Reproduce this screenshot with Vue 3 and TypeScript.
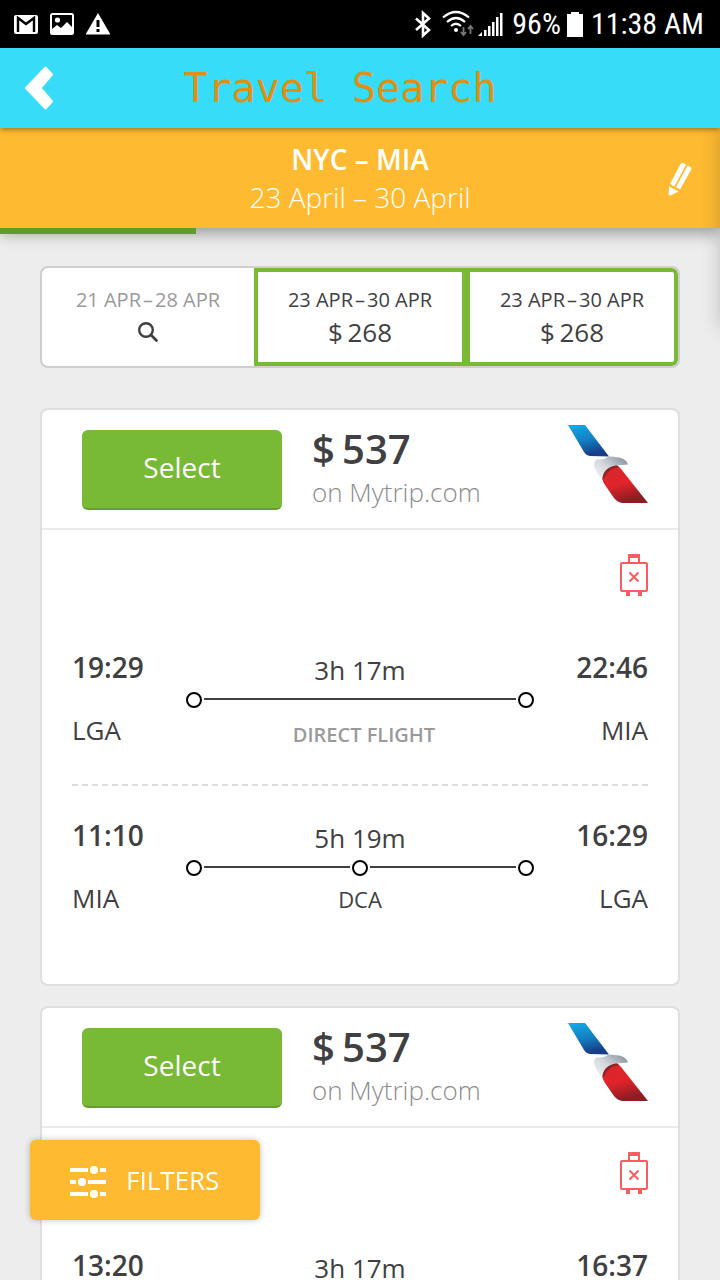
<script setup lang="ts">
import { ref } from 'vue'

interface DateOption {
  id: number
  start: string
  end: string
  price: number | null
}

interface Leg {
  depart: string
  from: string
  arrive: string
  to: string
  duration: string
  stop: string | null
}

interface Offer {
  id: number
  price: number
  agency: string
  legs: Leg[]
}

const dateOptions: DateOption[] = [
  { id: 1, start: '21 APR', end: '28 APR', price: null },
  { id: 2, start: '23 APR', end: '30 APR', price: 268 },
  { id: 3, start: '23 APR', end: '30 APR', price: 268 },
]

const offers: Offer[] = [
  {
    id: 1,
    price: 537,
    agency: 'Mytrip.com',
    legs: [
      { depart: '19:29', from: 'LGA', arrive: '22:46', to: 'MIA', duration: '3h 17m', stop: null },
      { depart: '11:10', from: 'MIA', arrive: '16:29', to: 'LGA', duration: '5h 19m', stop: 'DCA' },
    ],
  },
  {
    id: 2,
    price: 537,
    agency: 'Mytrip.com',
    legs: [
      { depart: '13:20', from: 'LGA', arrive: '16:37', to: 'MIA', duration: '3h 17m', stop: null },
    ],
  },
]

const progress = ref(27.2)
</script>

<template>
  <div class="app">
    <div class="status">
      <div class="status-group notices">
        <svg width="24" height="24" viewBox="0 0 24 24" aria-hidden="true">
          <rect x="0" y="3" width="24" height="19" rx="2" fill="#fff" />
          <path d="M4 20V6l8 6 8-6v14" fill="none" stroke="#000" stroke-width="2.4" />
        </svg>
        <svg width="24" height="24" viewBox="0 0 24 24" aria-hidden="true">
          <rect x="1" y="2" width="22" height="20" rx="1.5" fill="none" stroke="#fff" stroke-width="2" />
          <circle cx="7.5" cy="8" r="2.6" fill="#fff" />
          <path d="M2 17l5-4 4 3 6-6 5 5v7H2z" fill="#fff" />
        </svg>
        <svg width="24" height="24" viewBox="0 0 24 24" aria-hidden="true">
          <path d="M12 1L24.500 22.500H-.5z" fill="#fff" />
          <path d="M10.500 8h3v7h-3zM10.500 17h3v3h-3z" fill="#000" />
        </svg>
      </div>
      <div class="status-group">
        <svg width="18" height="28" viewBox="0 0 18 28" aria-hidden="true">
          <path d="M2 8.500l13 11.500-6 5.500V3l6 5.500L2 20" fill="none" stroke="#fff" stroke-width="2.6" />
        </svg>
        <svg class="wifi" width="32" height="28" viewBox="0 0 32 28" aria-hidden="true">
          <g fill="none" stroke="#fff" stroke-width="2.2">
            <path d="M1 7.500q13-11 26 0" />
            <path d="M5 12q9-8 18 0" />
            <path d="M9 16q5-4.500 10 0" />
          </g>
          <circle cx="14" cy="20" r="2" fill="#fff" />
          <path d="M21.500 17v8m-2.500-3l2.500 3 2.500-3M28.500 24v-8m-2.500 3l2.500-3 2.500 3" fill="none" stroke="#777" stroke-width="1.8" />
        </svg>
        <svg class="signal" width="25" height="28" viewBox="0 0 25 28" aria-hidden="true">
          <path d="M0 26l4-4v4zM6 20h2.500v6H6zM10 16h2.500v10H10zM14 12h2.500v14H14zM18 7h2.500v19H18zM22 3h2.500v23H22z" fill="#fff" />
        </svg>
        <span class="battery-text">96%</span>
        <svg class="battery" width="16" height="26" viewBox="0 0 16 26" aria-hidden="true">
          <path d="M4 1h8v2h4v23H0V3h4z" fill="#fff" />
        </svg>
        <span>11:38 AM</span>
      </div>
    </div>

    <header class="titlebar">
      <button class="back" type="button" aria-label="Back">
        <svg width="28" height="44" viewBox="0 0 28 44" aria-hidden="true">
          <path d="M1 22L20.500 1.500 27 8.500 15.500 22 27 35.500 20.500 42.500z" fill="#fff" stroke="#fff" stroke-width="2" stroke-linejoin="round" />
        </svg>
      </button>
      <h1>Travel Search</h1>
    </header>

    <section class="trip">
      <div class="trip-text">
        <h2>NYC – MIA</h2>
        <p>23 April – 30 April</p>
      </div>
      <button class="edit" type="button" aria-label="Edit search">
        <svg width="24" height="34" viewBox="0 0 24 34" aria-hidden="true">
          <g fill="#fff">
            <path d="M2 22L12.500 2q1-1.500 2.500-1l3 1.500L6.500 24.500z" />
            <path d="M8 25.200L19.500 3.500l3 1.500q1.500 1 .5 3L12 27.500z" />
            <path d="M1 24.500L10.500 29.500 2.500 33.500Q.5 34 .6 32z" />
          </g>
        </svg>
      </button>
      <div class="progress"><div class="progress-bar" :style="{ width: progress + '%' }"></div></div>
      <div class="drawer-edge"></div>
    </section>

    <main class="results">
      <nav class="dates" aria-label="Travel dates">
        <button
          v-for="option in dateOptions"
          :key="option.id"
          type="button"
          class="date"
          :class="{ priced: option.price !== null }"
        >
          <span class="range">{{ option.start }}<span class="dash">–</span>{{ option.end }}</span>
          <span v-if="option.price !== null" class="date-price">$<span class="amount">{{ option.price }}</span></span>
          <svg v-else class="search" width="22" height="22" viewBox="0 0 22 22" aria-label="Search these dates">
            <circle cx="9" cy="9" r="6.800" fill="none" stroke="#404042" stroke-width="2.400" />
            <path d="M14 14l5.500 5.500" stroke="#404042" stroke-width="2.800" stroke-linecap="round" />
          </svg>
        </button>
      </nav>

      <article v-for="offer in offers" :key="offer.id" class="card">
        <div class="card-head">
          <button class="select" type="button">Select</button>
          <div class="offer">
            <strong>$<span class="amount">{{ offer.price }}</span></strong>
            <span class="agency">on {{ offer.agency }}</span>
          </div>
          <svg class="airline" width="80" height="80" viewBox="0 0 80 80" role="img" aria-label="American Airlines">
            <defs>
              <linearGradient :id="'tail' + offer.id" x1="0" y1="0" x2="0.3" y2="1">
                <stop offset="0" stop-color="#13ace8" />
                <stop offset="0.55" stop-color="#1380c3" />
                <stop offset="1" stop-color="#163f88" />
              </linearGradient>
              <linearGradient :id="'head' + offer.id" x1="0" y1="1" x2="1" y2="0.2">
                <stop offset="0" stop-color="#f4f6f8" />
                <stop offset="0.5" stop-color="#d3d8dd" />
                <stop offset="1" stop-color="#8b959f" />
              </linearGradient>
              <linearGradient :id="'wing' + offer.id" x1="0" y1="0" x2="0.3" y2="1">
                <stop offset="0" stop-color="#d5272d" />
                <stop offset="0.55" stop-color="#e2232a" />
                <stop offset="1" stop-color="#8d1d22" />
              </linearGradient>
            </defs>
            <path d="M0 1H17L41 32.500 22 32Q18 31.500 16 28z" :fill="`url(#tail${offer.id})`" />
            <path d="M29 35Q34 37 41 32.500 50 33 53 34 59 36 60 40.500L49 41.500Q38 45 34.500 55.500 27 48 26 41 26 37 29 35z" :fill="`url(#head${offer.id})`" />
            <path d="M34.500 55.500Q35 44 48.500 41.500 51 42 53 45L80 79H54Q49 78 46 74L37 61Q35 58 34.500 55.500z" :fill="`url(#wing${offer.id})`" />
            <path d="M34.500 55.500Q35 43 49 41.500L51 43 44 45Q39 48 37 53z" fill="#8e2424" />
          </svg>
        </div>

        <div class="card-body">
          <svg class="luggage" width="28" height="42" viewBox="0 0 28 42" role="img" aria-label="No checked bag">
            <g fill="none" stroke="#f95d62" stroke-width="2">
              <rect x="1" y="9" width="26" height="28" rx="1" />
              <path d="M9.500 18.500l9 9m0-9l-9 9" />
            </g>
            <path d="M8 0h12v8h-2V4h-8v4H8zM6 38h4v4H6zM18 38h4v4h-4z" fill="#f95d62" />
          </svg>

          <div v-for="leg in offer.legs" :key="leg.depart" class="leg">
            <div class="end">
              <span class="time">{{ leg.depart }}</span>
              <span class="airport">{{ leg.from }}</span>
            </div>
            <div class="route">
              <span class="duration">{{ leg.duration }}</span>
              <div class="track">
                <i class="node"></i><i class="line"></i>
                <template v-if="leg.stop"><i class="node"></i><i class="line"></i></template>
                <i class="node"></i>
              </div>
              <span v-if="leg.stop" class="stop">{{ leg.stop }}</span>
              <span v-else class="direct">DIRECT FLIGHT</span>
            </div>
            <div class="end right">
              <span class="time">{{ leg.arrive }}</span>
              <span class="airport">{{ leg.to }}</span>
            </div>
          </div>
        </div>
      </article>
    </main>

    <button class="filters" type="button">
      <svg width="36" height="38" viewBox="0 -4 36 38" aria-hidden="true">
        <g fill="#fff">
          <path d="M0 3h18v4H0zM30 3h6v4h-6zM0 15h6v4H0zM18 15h18v4H18zM0 27h18v4H0zM30 27h6v4h-6z" />
          <circle cx="24" cy="5" r="4" />
          <circle cx="12" cy="17" r="4" />
          <circle cx="24" cy="29" r="4" />
        </g>
      </svg>
      FILTERS
    </button>
  </div>
</template>

<style>
body {
  margin: 0;
  background: #ededed;
}
</style>

<style scoped>
.app {
  position: relative;
  height: 100vh;
  display: flex;
  flex-direction: column;
  overflow: hidden;
  background: #ededed;
  color: #404042;
  font-family: "Open Sans", "Noto Sans", sans-serif;
}

button {
  font-family: inherit;
  color: inherit;
  border: 0;
  padding: 0;
  margin: 0;
  background: none;
  cursor: pointer;
}

svg {
  display: block;
  flex: none;
}

.status {
  flex: none;
  height: 48px;
  padding: 0 16px 0 14px;
  display: flex;
  align-items: center;
  justify-content: space-between;
  background: #000;
  color: #fff;
  font: 30px/50px "Roboto Condensed", Roboto, sans-serif;
}

.status-group {
  display: flex;
  align-items: center;
}

.notices {
  gap: 12px;
}

.wifi {
  margin-left: 10px;
}

.signal {
  margin-left: 4px;
}

.battery-text {
  margin-left: 9px;
}

.battery {
  margin: 0 8px 0 6px;
}

.titlebar {
  position: relative;
  z-index: 3;
  flex: none;
  height: 80px;
  display: grid;
  grid-template-columns: 1fr auto 1fr;
  align-items: center;
  padding: 0 65px 0 25px;
  background: #37dcf8;
  box-shadow: 0 1px 6px rgba(0, 0, 0, 0.45);
}

.back {
  justify-self: start;
}

.titlebar h1 {
  margin: 0;
  font: 400 40px/72px "DejaVu Sans Mono", monospace;
  color: #df9013;
}

.trip {
  position: relative;
  z-index: 2;
  flex: none;
  height: 100px;
  display: flex;
  align-items: center;
  justify-content: center;
  background: #feba31;
  color: #fff;
  box-shadow: 0 4px 16px rgba(0, 0, 0, 0.4);
}

.trip-text {
  text-align: center;
}

.trip h2,
.trip p {
  margin: 0;
  font-size: 28px;
  line-height: 38px;
}

.trip h2 {
  font-weight: 600;
}

.trip p {
  font-weight: 300;
}

.edit {
  position: absolute;
  right: 28px;
  top: 34px;
}

.progress {
  position: absolute;
  left: 0;
  right: 0;
  top: 100%;
  height: 6px;
}

.progress-bar {
  height: 100%;
  background: #629a2b;
}

.drawer-edge {
  position: absolute;
  left: 100%;
  top: 0;
  width: 40px;
  height: 200px;
  box-shadow: 0 0 20px rgba(0, 0, 0, 0.2);
}

.results {
  flex: 1;
  min-height: 0;
  padding: 38px 40px 0;
  display: flex;
  flex-direction: column;
  overflow: hidden auto;
  scrollbar-width: none;
}

.dates {
  flex: none;
  display: grid;
  grid-template-columns: repeat(3, 1fr);
  border: 2px solid #cfcfcf;
  border-radius: 8px;
  background: #fff;
  overflow: hidden;
  margin-bottom: 40px;
}

.date {
  box-sizing: border-box;
  height: 98px;
  display: flex;
  flex-direction: column;
  align-items: center;
  justify-content: center;
  border: 4px solid transparent;
  color: #9a9a9a;
}

.date.priced {
  border-color: #78b936;
  color: #404042;
}

.date:last-child {
  border-radius: 0 6px 6px 0;
}

.range {
  font-size: 20px;
  line-height: 30px;
}

.dash {
  margin: 0 2px;
}

.date-price {
  font-size: 26px;
  line-height: 34px;
}

.search {
  margin: 6px 0;
}

.amount {
  margin-left: 0.18em;
}

.card {
  flex: none;
  border: 2px solid #dfdfdf;
  border-radius: 8px;
  background: #fff;
  margin-bottom: 20px;
}

.card-head {
  box-sizing: border-box;
  height: 120px;
  display: flex;
  align-items: flex-start;
  padding: 14px 30px 0 40px;
  border-bottom: 2px solid #ebebeb;
}

.select {
  box-sizing: border-box;
  width: 200px;
  height: 80px;
  margin-top: 6px;
  padding-bottom: 4px;
  border-radius: 6px;
  border-bottom: 2px solid #679f2e;
  background: #78b936;
  color: #fff;
  font-size: 28px;
}

.offer {
  flex: 1;
  margin-left: 30px;
  display: flex;
  flex-direction: column;
}

.offer strong {
  font-size: 40px;
  line-height: 50px;
  font-weight: 600;
}

.agency {
  font-size: 26px;
  line-height: 36px;
  font-weight: 300;
  color: #8c8c8c;
}

.card-body {
  padding: 24px 30px 30px;
}

.luggage {
  margin: 0 0 22px auto;
}

.leg {
  box-sizing: border-box;
  height: 168px;
  padding-top: 29px;
  display: grid;
  grid-template-columns: 1fr 348px 1fr;
}

.leg:not(:last-child) {
  background: repeating-linear-gradient(90deg, #dedede 0 6px, transparent 6px 10px) left bottom / 100% 2px no-repeat;
}

.end {
  display: flex;
  flex-direction: column;
  gap: 24px;
}

.right {
  text-align: right;
}

.time {
  font-size: 28px;
  line-height: 40px;
  font-weight: 600;
}

.airport {
  font-size: 26px;
  line-height: 38px;
}

.route {
  padding-top: 4px;
  text-align: center;
  display: flex;
  flex-direction: column;
}

.duration {
  font-size: 26px;
  line-height: 38px;
}

.track {
  display: flex;
  align-items: center;
  margin: 3px 0 7px;
}

.node {
  box-sizing: border-box;
  width: 16px;
  height: 16px;
  border: 2px solid #000;
  border-radius: 50%;
}

.line {
  flex: 1;
  height: 2px;
  margin: 0 2px 2px;
  background: #404042;
}

.stop {
  font-size: 22px;
  line-height: 32px;
}

.direct {
  font-size: 20px;
  line-height: 40px;
  font-weight: 600;
  color: #9a9a9a;
  padding-left: 8px;
}

.filters {
  position: fixed;
  z-index: 4;
  left: 30px;
  bottom: 60px;
  height: 80px;
  min-width: 230px;
  padding: 0 40px;
  display: flex;
  align-items: center;
  gap: 20px;
  border-radius: 6px;
  background: #feba31;
  color: #fff;
  font-size: 26px;
  box-shadow: 0 0 6px rgba(0, 0, 0, 0.25);
}
</style>
